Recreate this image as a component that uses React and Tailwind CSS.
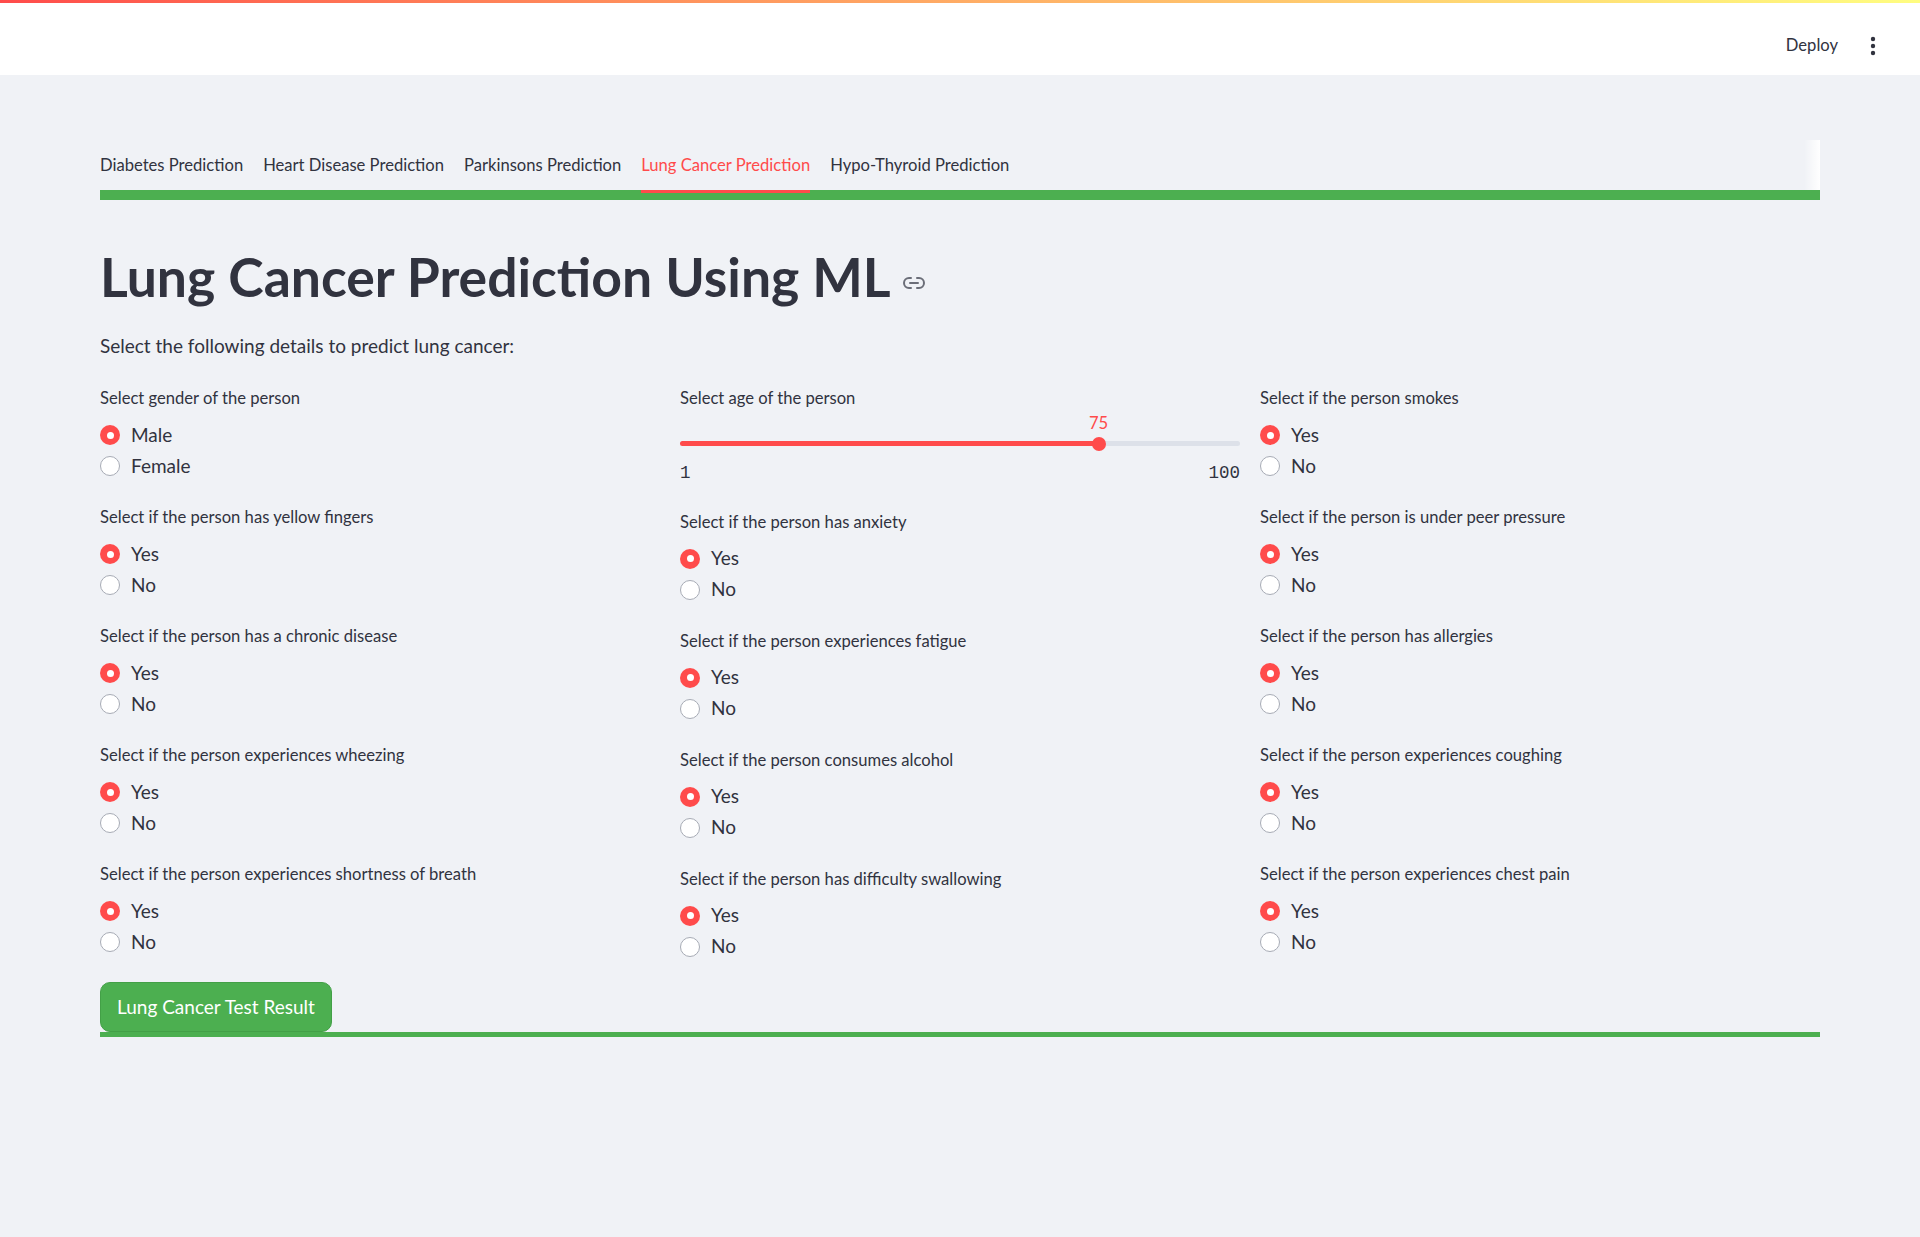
import React, { useState } from "react";
import { Link2 } from "lucide-react";

const tabs = [
  "Diabetes Prediction",
  "Heart Disease Prediction",
  "Parkinsons Prediction",
  "Lung Cancer Prediction",
  "Hypo-Thyroid Prediction",
];

const yesNo = ["Yes", "No"];

// three columns, top to bottom, like the streamlit page
const col1 = [
  { label: "Select gender of the person", options: ["Male", "Female"] },
  { label: "Select if the person has yellow fingers", options: yesNo },
  { label: "Select if the person has a chronic disease", options: yesNo },
  { label: "Select if the person experiences wheezing", options: yesNo },
  { label: "Select if the person experiences shortness of breath", options: yesNo },
];

const col2 = [
  { label: "Select if the person has anxiety", options: yesNo },
  { label: "Select if the person experiences fatigue", options: yesNo },
  { label: "Select if the person consumes alcohol", options: yesNo },
  { label: "Select if the person has difficulty swallowing", options: yesNo },
];

const col3 = [
  { label: "Select if the person smokes", options: yesNo },
  { label: "Select if the person is under peer pressure", options: yesNo },
  { label: "Select if the person has allergies", options: yesNo },
  { label: "Select if the person experiences coughing", options: yesNo },
  { label: "Select if the person experiences chest pain", options: yesNo },
];

const RadioGroup = ({ label, options }) => {
  const [value, setValue] = useState(options[0]);
  return (
    <div className="flex flex-col">
      <div className="h-[30px] leading-[30px] text-[16.6px] text-[#31333f]">{label}</div>
      <div className="mt-[6.5px] flex flex-col">
        {options.map((opt) => (
          <button
            key={opt}
            onClick={() => setValue(opt)}
            className="h-[31px] flex items-center gap-[11px] text-left"
          >
            {value === opt ? (
              <span className="w-[20px] h-[20px] rounded-full bg-[#ff4b4b] flex items-center justify-center">
                <span className="w-[7px] h-[7px] rounded-full bg-white"></span>
              </span>
            ) : (
              <span className="w-[20px] h-[20px] rounded-full bg-white border border-[#a7abb5]"></span>
            )}
            <span className="text-[19px] text-[#31333f]">{opt}</span>
          </button>
        ))}
      </div>
    </div>
  );
};

const AgeSlider = () => {
  const [age] = useState(75);
  const pct = ((age - 1) / 99) * 100;
  return (
    <div className="flex flex-col pb-[3px]">
      <div className="h-[30px] leading-[30px] text-[16.6px] text-[#31333f]">Select age of the person</div>
      <div className="relative h-[40px]">
        {/* value bubble over the thumb */}
        <div
          className="absolute top-0 h-[20px] leading-[20px] text-[16.6px] text-[#ff4b4b] -translate-x-1/2"
          style={{ left: `${pct}%` }}
        >
          {age}
        </div>
        <div className="absolute left-0 right-0 top-[28px] h-[5px] rounded-full bg-[#dde1e9]">
          <div className="h-full rounded-full bg-[#ff4b4b]" style={{ width: `${pct}%` }}></div>
        </div>
        <div
          className="absolute top-[23.5px] w-[14px] h-[14px] rounded-full bg-[#ff4b4b] -translate-x-1/2"
          style={{ left: `${pct}%` }}
        ></div>
      </div>
      <div className="mt-[10px] h-[20px] leading-[20px] flex justify-between text-[17.5px] text-[#31333f] font-['Liberation_Mono',monospace]">
        <span>1</span>
        <span>100</span>
      </div>
    </div>
  );
};

const App = () => {
  const [tab, setTab] = useState("Lung Cancer Prediction");

  return (
    <div className="min-h-screen bg-[#f0f2f6] font-['Lato',sans-serif] text-[#31333f]">
      {/* Header */}
      <div className="h-[75px] bg-white flex flex-col">
        <div className="h-[3px] bg-gradient-to-r from-[#ff4b4b] to-[#fffd80]"></div>
        <div className="flex-1 flex items-center justify-end pr-[44px] pt-[13px]">
          <span className="text-[16.6px] text-[#31333f] mr-[32px]">Deploy</span>
          <svg width="6" height="20" viewBox="0 0 6 20">
            <circle cx="3" cy="3" r="2.2" fill="#31333f" />
            <circle cx="3" cy="10" r="2.2" fill="#31333f" />
            <circle cx="3" cy="17" r="2.2" fill="#31333f" />
          </svg>
        </div>
      </div>

      {/* Main */}
      <div className="px-[100px] pt-[65px] pb-[40px]">
        {/* Tabs */}
        <div className="relative border-b-[10px] border-[#4caf50]">
          <div className="h-[50px] flex items-center gap-[20px]">
            {tabs.map((t) => (
              <button
                key={t}
                onClick={() => setTab(t)}
                className={`relative h-full flex items-center text-[16.6px] ${
                  tab === t ? "text-[#ff4b4b]" : "text-[#31333f]"
                }`}
              >
                {t}
                {tab === t && (
                  <span className="absolute left-0 right-0 -bottom-[3px] h-[3px] bg-[#ff4b4b]"></span>
                )}
              </button>
            ))}
          </div>
          <div className="absolute right-0 top-0 h-[50px] w-[16px] bg-gradient-to-r from-transparent to-white"></div>
        </div>

        {/* Title */}
        <div className="mt-[43px] h-[66px] flex items-center">
          <h1 className="text-[53.5px] leading-[66px] font-bold text-[#31333f]">Lung Cancer Prediction Using ML</h1>
          <Link2 className="ml-[11px] mt-[14px] w-[24px] h-[24px] text-[#6b6e78]" strokeWidth={2} />
        </div>

        <p className="mt-[21px] h-[32px] leading-[32px] text-[19px]">
          Select the following details to predict lung cancer:
        </p>

        {/* Inputs */}
        <div className="mt-[21px] grid grid-cols-3 gap-x-[20px]">
          <div className="flex flex-col gap-[20.5px]">
            {col1.map((f) => (
              <RadioGroup key={f.label} label={f.label} options={f.options} />
            ))}
          </div>
          <div className="flex flex-col gap-[20.5px]">
            <AgeSlider />
            {col2.map((f) => (
              <RadioGroup key={f.label} label={f.label} options={f.options} />
            ))}
          </div>
          <div className="flex flex-col gap-[20.5px]">
            {col3.map((f) => (
              <RadioGroup key={f.label} label={f.label} options={f.options} />
            ))}
          </div>
        </div>

        {/* Result button */}
        <div className="mt-[20px] border-b-[5px] border-[#4caf50]">
          <button className="h-[50px] px-[16px] rounded-[10px] bg-[#4caf50] border border-[#43a047] text-white text-[19px]">
            Lung Cancer Test Result
          </button>
        </div>
      </div>
    </div>
  );
};

export default App;
